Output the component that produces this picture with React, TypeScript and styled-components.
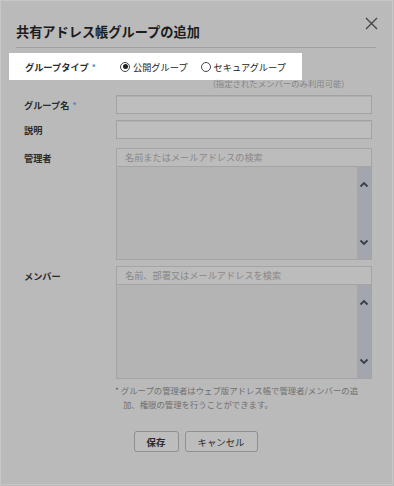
import { createGlobalStyle } from "styled-components";
import styled from "styled-components";

const GlobalStyle = createGlobalStyle`
  html, body {
    margin: 0;
    padding: 0;
    background: #bababa;
  }
  body {
    font-family: "Noto Sans CJK JP", "Noto Sans", sans-serif;
    color: #2b2b2b;
  }
  * {
    box-sizing: border-box;
  }
`;

const Dialog = styled.div`
  width: 393px;
  height: 485px;
  background: #bababa;
  border: 1px solid #c7c7c7;
  padding: 0 16px 0 15px;
  display: flex;
  flex-direction: column;
`;

const Header = styled.div`
  height: 47px;
  display: flex;
  justify-content: space-between;
  border-bottom: 1px solid #9e9e9e;
`;

const Title = styled.h1`
  margin: 0;
  align-self: flex-end;
  padding-bottom: 6px;
  font-size: 13.2px;
  font-weight: 700;
  color: #1c1c1c;
  letter-spacing: 0;
`;

const CloseButton = styled.button`
  margin-top: 14px;
  margin-right: -3px;
  width: 16px;
  height: 16px;
  padding: 0;
  border: 0;
  background: transparent;
  display: flex;
  align-items: center;
  justify-content: center;
`;

const Spotlight = styled.div`
  margin: 5px 0 0 -7px;
  width: 293px;
  height: 27px;
  background: #ffffff;
  display: flex;
  align-items: center;
  padding-left: 16px;
`;

const Label = styled.div<{ $top?: number }>`
  width: 92px;
  flex-shrink: 0;
  font-size: 9.2px;
  font-weight: 700;
  color: #2a2a2a;
  align-self: ${(p) => (p.$top !== undefined ? "flex-start" : "center")};
  margin-top: ${(p) => p.$top ?? 0}px;
`;

const Required = styled.span`
  color: #4f7fc0;
  font-size: 8px;
  margin-left: 3px;
  vertical-align: 1px;
`;

const RadioGroup = styled.div`
  display: flex;
  align-items: center;
  gap: 13px;
  margin-left: 3px;
`;

const RadioItem = styled.label`
  display: flex;
  align-items: center;
  gap: 3px;
  font-size: 9.2px;
  color: #222;
`;

const RadioCircle = styled.span<{ $checked?: boolean }>`
  width: 10px;
  height: 10px;
  border-radius: 50%;
  border: 1px solid #444;
  display: flex;
  align-items: center;
  justify-content: center;
  &::after {
    content: "";
    width: 5px;
    height: 5px;
    border-radius: 50%;
    background: ${(p) => (p.$checked ? "#222" : "transparent")};
  }
`;

const Hint = styled.div`
  margin: -2px 0 0 197px;
  font-size: 8.4px;
  line-height: 10px;
  color: #858585;
`;

const Form = styled.div`
  padding-left: 8px;
  display: flex;
  flex-direction: column;
`;

const Row = styled.div<{ $gap: number }>`
  display: flex;
  margin-top: ${(p) => p.$gap}px;
`;

const TextInput = styled.div`
  width: 256px;
  height: 19px;
  background: #bebebe;
  border: 1px solid #a2a2a2;
  box-shadow: inset 0 1px 0 #b0b0b0;
`;

const Picker = styled.div<{ $height: number }>`
  width: 256px;
  height: ${(p) => p.$height}px;
  border: 1px solid #a4a4a4;
  display: flex;
  flex-direction: column;
`;

const Search = styled.div`
  height: 18px;
  background: #bcbcbc;
  border-bottom: 1px solid #a4a4a4;
  font-size: 9.2px;
  line-height: 17px;
  padding-left: 8px;
  color: #888888;
`;

const ListArea = styled.div`
  flex: 1;
  display: flex;
  justify-content: flex-end;
  background: #b4b4b4;
`;

const ScrollTrack = styled.div`
  width: 14px;
  background: #a3a6ac;
  display: flex;
  flex-direction: column;
  justify-content: space-between;
  align-items: center;
  padding: 14px 0 13px;
`;

const Note = styled.div`
  margin: 4px 0 0 99px;
  width: 250px;
  font-size: 8.4px;
  line-height: 14px;
  color: #6f6f6f;
  padding-left: 8px;
  text-indent: -8px;
`;

const Buttons = styled.div`
  margin-top: 20px;
  display: flex;
  justify-content: center;
  gap: 6px;
  padding-right: 1px;
`;

const Button = styled.button<{ $primary?: boolean; $width: number }>`
  width: ${(p) => p.$width}px;
  height: 21px;
  padding: 0;
  background: #bdbdbd;
  border: 1px solid #909090;
  border-radius: 3px;
  font-family: inherit;
  font-size: 9.4px;
  font-weight: ${(p) => (p.$primary ? 700 : 400)};
  color: #2a2a2a;
`;

const Chevron = ({ up }: { up?: boolean }) => (
  <svg width="10" height="7" viewBox="0 0 10 7">
    <path
      d={up ? "M1.5 5.5 L5 2 L8.5 5.5" : "M1.5 1.5 L5 5 L8.5 1.5"}
      fill="none"
      stroke="#3a414c"
      strokeWidth="1.9"
    />
  </svg>
);

const PickerField = ({ placeholder, height }: { placeholder: string; height: number }) => (
  <Picker $height={height}>
    <Search>{placeholder}</Search>
    <ListArea>
      <ScrollTrack>
        <Chevron up />
        <Chevron />
      </ScrollTrack>
    </ListArea>
  </Picker>
);

export default function App() {
  return (
    <>
      <GlobalStyle />
      <Dialog>
        <Header>
          <Title>共有アドレス帳グループの追加</Title>
          <CloseButton>
            <svg width="13" height="13" viewBox="0 0 13 13">
              <path d="M1 1 L12 12 M12 1 L1 12" stroke="#444" strokeWidth="1.3" />
            </svg>
          </CloseButton>
        </Header>

        <Spotlight>
          <Label>
            グループタイプ<Required>*</Required>
          </Label>
          <RadioGroup>
            <RadioItem>
              <RadioCircle $checked />
              公開グループ
            </RadioItem>
            <RadioItem>
              <RadioCircle />
              セキュアグループ
            </RadioItem>
          </RadioGroup>
        </Spotlight>
        <Hint>(指定されたメンバーのみ利用可能)</Hint>

        <Form>
          <Row $gap={7}>
            <Label>
              グループ名<Required>*</Required>
            </Label>
            <TextInput />
          </Row>
          <Row $gap={6}>
            <Label>説明</Label>
            <TextInput />
          </Row>
          <Row $gap={9}>
            <Label $top={3}>管理者</Label>
            <PickerField placeholder="名前またはメールアドレスの検索" height={112} />
          </Row>
          <Row $gap={6}>
            <Label $top={3}>メンバー</Label>
            <PickerField placeholder="名前、部署又はメールアドレスを検索" height={113} />
          </Row>
        </Form>

        <Note>* グループの管理者はウェブ版アドレス帳で管理者/メンバーの追加、権限の管理を行うことができます。</Note>

        <Buttons>
          <Button $primary $width={45}>保存</Button>
          <Button $width={73}>キャンセル</Button>
        </Buttons>
      </Dialog>
    </>
  );
}
